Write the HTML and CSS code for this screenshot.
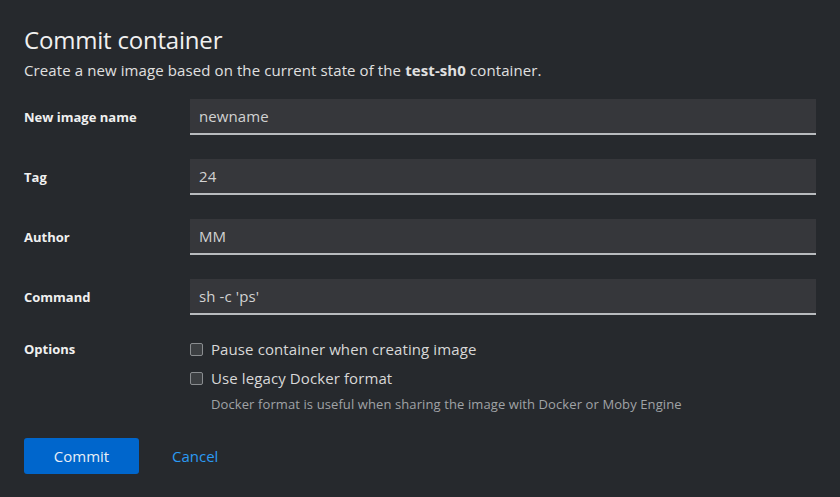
FILE: index.html
```html
<!DOCTYPE html>
<html>
<head>
<meta charset="utf-8">
<link rel="stylesheet" href="styles.css">
</head>
<body>
<div class="modal">
  <h1 class="title">Commit container</h1>
  <p class="desc">Create a new image based on the current state of the <b>test-sh0</b> container.</p>
  <form class="form">
    <label class="label">New image name</label>
    <div class="input">newname</div>
    <label class="label">Tag</label>
    <div class="input">24</div>
    <label class="label">Author</label>
    <div class="input">MM</div>
    <label class="label">Command</label>
    <div class="input">sh -c 'ps'</div>
    <label class="label opt">Options</label>
    <div class="options">
      <div class="check"><span class="box"></span><span>Pause container when creating image</span></div>
      <div class="check"><span class="box"></span><span>Use legacy Docker format</span></div>
      <div class="help">Docker format is useful when sharing the image with Docker or Moby Engine</div>
    </div>
  </form>
  <div class="actions">
    <button class="btn primary" type="button">Commit</button>
    <button class="btn link" type="button">Cancel</button>
  </div>
</div>
</body>
</html>
```
FILE: styles.css
```css
html, body {
  margin: 0;
  padding: 0;
  background: #26292d;
  width: 840px;
  height: 497px;
  overflow: hidden;
}
body {
  font-family: "Open Sans", "Noto Sans", sans-serif;
  color: #e0e0e0;
}
.modal {
  padding: 24px 24px 0 24px;
}
.title {
  margin: 0;
  font-size: 24px;
  font-weight: 400;
  line-height: 32px;
  color: #f0f0f0;
  letter-spacing: -0.2px;
}
.desc {
  margin: 4px 0 0 0;
  font-size: 15px;
  line-height: 21px;
  letter-spacing: 0.1px;
  color: #e0e0e0;
}
.desc b {
  font-weight: 700;
}
.form {
  margin-top: 18px;
  display: grid;
  grid-template-columns: 166px 1fr;
  row-gap: 24px;
  align-items: center;
}
.label {
  font-size: 13px;
  font-weight: 700;
  color: #f0f0f0;
}
.label.opt {
  align-self: start;
  line-height: 20px;
}
.input {
  height: 34px;
  background: #36373b;
  border-bottom: 2px solid #b8bbbe;
  box-sizing: content-box;
  font-size: 15px;
  line-height: 34px;
  letter-spacing: 0.1px;
  padding: 0 9px;
  color: #d2d2d2;
}
.options {
  display: flex;
  flex-direction: column;
  gap: 9px;
  margin-top: 0;
}
.check {
  display: flex;
  align-items: center;
  gap: 8px;
  font-size: 15px;
  letter-spacing: 0.1px;
  line-height: 20px;
  color: #d8d8d8;
}
.box {
  width: 11px;
  height: 11px;
  border: 1px solid #8a8d90;
  border-radius: 2px;
  background: #3c3f42;
}
.help {
  margin-left: 21px;
  font-size: 13px;
  letter-spacing: 0.1px;
  line-height: 18px;
  color: #a0a3a6;
  margin-top: -2px;
}
.actions {
  margin-top: 25px;
  display: flex;
  align-items: center;
  gap: 17px;
}
.btn {
  font-family: inherit;
  font-size: 15px;
  border: 0;
  height: 36px;
  padding: 0 16px;
  cursor: pointer;
}
.btn.primary {
  background: #0066cc;
  color: #e8eef6;
  border-radius: 3px;
  width: 115px;
}
.btn.link {
  background: transparent;
  color: #2b9af3;
}
```
